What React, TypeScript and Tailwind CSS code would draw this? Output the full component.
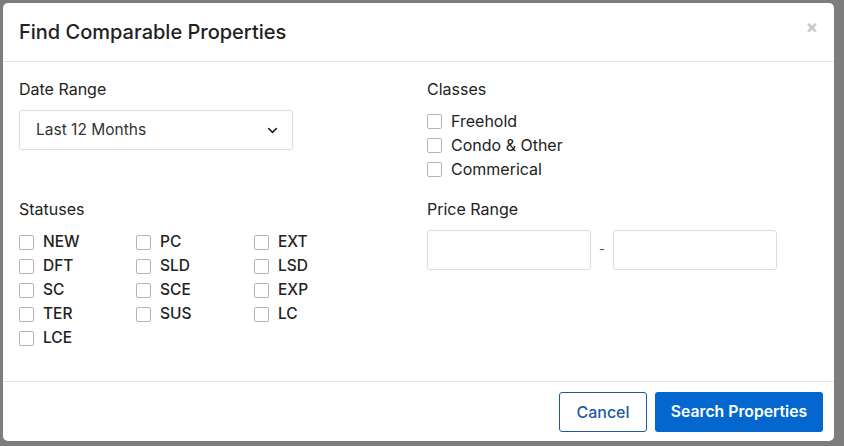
import { ChevronDown } from "lucide-react";

const statuses = [
  ["NEW", "PC", "EXT"],
  ["DFT", "SLD", "LSD"],
  ["SC", "SCE", "EXP"],
  ["TER", "SUS", "LC"],
  ["LCE"],
];

const classes = ["Freehold", "Condo & Other", "Commerical"];

function Check({ label, bold }: { label: string; bold?: boolean }) {
  return (
    <label className="flex h-6 items-center gap-[9px]">
      <span className="h-[15px] w-[15px] rounded-[2px] border border-[#b5b5b5] bg-white" />
      <span className={bold ? "text-[15.5px] font-medium text-[#222]" : "text-[16px] text-[#222]"}>{label}</span>
    </label>
  );
}

export default function App() {
  return (
    <div
      className="h-[446px] w-[844px] bg-[#7d7d7d] pl-[3px] pt-[3px]"
      style={{ fontFamily: "Inter, 'Noto Sans', sans-serif" }}
    >
      <div className="flex h-[438px] w-[831px] flex-col rounded-[5px] bg-white">
        <div className="flex h-[59px] items-center justify-between border-b border-[#e5e5e5] px-[16px]">
          <h1 className="text-[20px] font-medium text-[#222]">Find Comparable Properties</h1>
          <span className="-mt-[10px] text-[18px] font-bold leading-none text-[#c8c8c8]">×</span>
        </div>

        <div className="flex flex-1 px-[16px] pt-[15px]">
          <div className="w-[408px]">
            <div className="text-[16px] text-[#222]">Date Range</div>
            <div className="mt-[9px] flex h-[40px] w-[274px] items-center justify-between rounded-[3px] border border-[#dcdcdc] pl-[16px] pr-[12px] text-[15.5px] text-[#333]">
              Last 12 Months
              <ChevronDown size={15} strokeWidth={2.5} className="text-[#222]" />
            </div>

            <div className="mt-[47px] text-[16px] text-[#222]">Statuses</div>
            <div className="mt-[9px] flex flex-col">
              {statuses.map((row, i) => (
                <div key={i} className="grid grid-cols-[117px_118px_117px]">
                  {row.map((s) => (
                    <Check key={s} label={s} bold />
                  ))}
                </div>
              ))}
            </div>
          </div>

          <div className="flex-1">
            <div className="text-[16px] text-[#222]">Classes</div>
            <div className="mt-[8px] flex flex-col">
              {classes.map((c) => (
                <Check key={c} label={c} />
              ))}
            </div>

            <div className="mt-[16px] text-[16px] text-[#222]">Price Range</div>
            <div className="mt-[9px] flex items-center">
              <div className="h-[40px] w-[164px] rounded-[3px] border border-[#dcdcdc]" />
              <span className="w-[22px] text-center text-[13px] text-[#555]">-</span>
              <div className="h-[40px] w-[164px] rounded-[3px] border border-[#dcdcdc]" />
            </div>
          </div>
        </div>

        <div className="flex h-[60px] items-center justify-end gap-[8px] border-t border-[#e5e5e5] pr-[11px]">
          <button className="h-[40px] w-[88px] rounded-[3px] border border-[#1d5a9e] text-[16px] font-medium text-[#1d5a9e]">
            Cancel
          </button>
          <button className="h-[40px] w-[168px] rounded-[3px] bg-[#0467cf] text-[15.75px] font-semibold text-white">
            Search Properties
          </button>
        </div>
      </div>
    </div>
  );
}
